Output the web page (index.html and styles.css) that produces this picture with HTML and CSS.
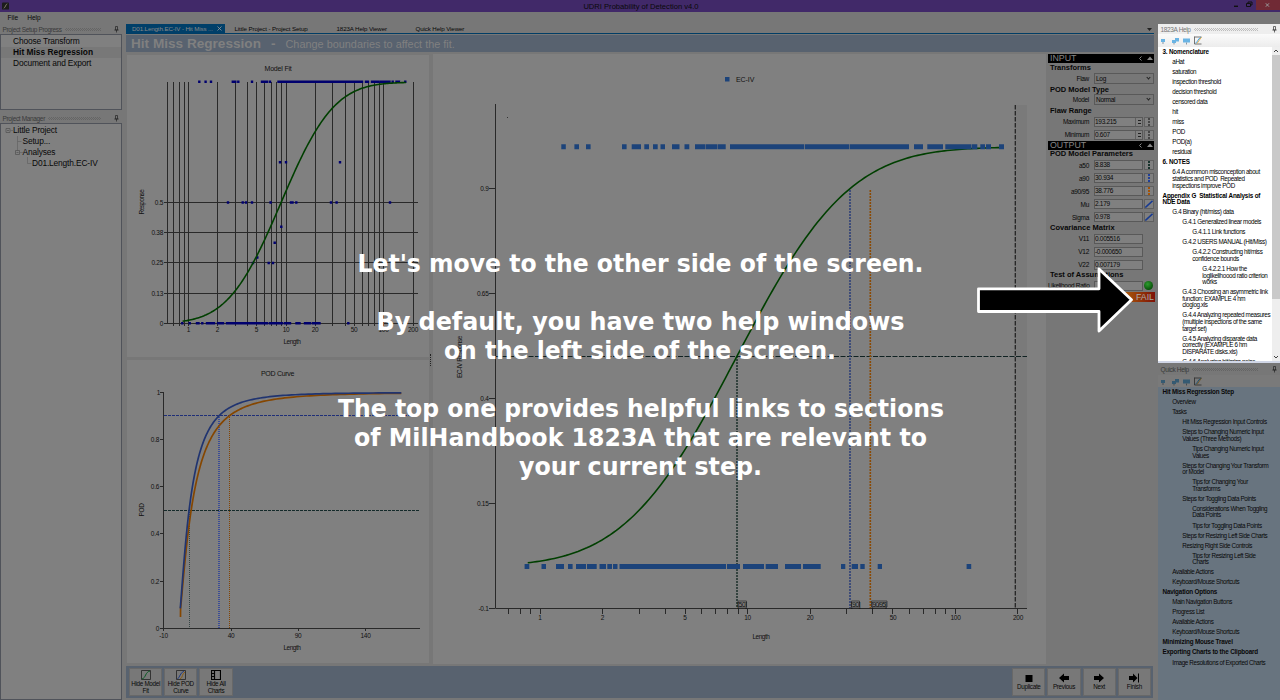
FILE: index.html
```
<!DOCTYPE html>
<html lang="en">
<head>
<meta charset="utf-8">
<title>UDRI Probability of Detection v4.0</title>
<link rel="stylesheet" href="styles.css">
</head>
<body>
<div class="app">
  <header class="titlebar">
    <svg class="logo" viewBox="0 0 8 8"><rect width="8" height="8" rx="1" fill="#1c1c1c"/><path d="M2 6.500C4 6 4 2 6 1.500" stroke="#8a8570" fill="none"/></svg>
    <span>UDRI Probability of Detection v4.0</span>
    <svg class="winbtns" viewBox="0 0 50 10"><rect x="26" width="24" height="10" fill="#702a35"/><path d="M4 6.300h4" stroke="#111" stroke-width="1.400"/><path d="M16.500 3.500h4v3h-4zM18 3.500v-1.500h4v3h-1.500" stroke="#111" fill="none"/><path d="M35.800 3.300l3.200 3.400M39 3.300L35.800 6.700" stroke="#999"/></svg>
  </header>
  <nav class="menu"><span>File</span><span>Help</span></nav>
  <div class="main">
    <aside class="left">
      <div class="phead"><span>Project Setup Progress</span><i></i><svg viewBox="0 0 5 7"><path d="M1.500.5h2v3.500h-2zM.3 4h4.400M2.500 4v2.500" stroke="#222" stroke-width=".7" fill="none"/></svg></div>
      <div class="steps"><div>Choose Transform</div><div class="on">Hit Miss Regression</div><div>Document and Export</div></div>
      <div class="phead second"><span>Project Manager</span><i></i><svg viewBox="0 0 5 7"><path d="M1.500.5h2v3.500h-2zM.3 4h4.400M2.500 4v2.500" stroke="#222" stroke-width=".7" fill="none"/></svg></div>
      <div class="ptree">
        <svg class="lines" viewBox="0 0 36 50"><path d="M9.500 6.500h3M16.500 12v15M16.500 17.500h4M19 28.500h3M26.500 33v6.500h4" stroke="#666" fill="none" stroke-width=".8"/><path d="M5 4.500h4v4H5zM14.500 26.500h4v4h-4zM6 6.500h2M15.500 28.500h2" stroke="#555" fill="none" stroke-width=".8"/></svg>
        <div class="t0">Little Project</div><div class="t1">Setup...</div><div class="t1">Analyses</div><div class="t2">D01.Length.EC-IV</div>
      </div>
    </aside>
    <main class="center">
      <div class="tabs"><span class="tab on">D01.Length.EC-IV - Hit Miss ...<svg viewBox="0 0 5 5"><path d="M.5.5l4 4M4.500.5l-4 4" stroke="#999" stroke-width=".8"/></svg></span><span class="tab b">Little Project - Project Setup</span><span class="tab c">1823A Help Viewer</span><span class="tab d">Quick Help Viewer</span><span class="drop"></span></div>
      <div class="heading"><b>Hit Miss Regression</b><b class="dash">-</b><span>Change boundaries to affect the fit.</span></div>
      <div class="work">
        <div class="minis">
          <svg class="chart" id="fit" viewBox="127 55 302 302">
            <g id="fitgrid" class="grid"></g>
            <g class="grid"><path d="M167.500 82V324M164 202.500H418M164 232.500H418M164 262.500H418M164 293.500H418M164 323.500H418"/></g>
            <path id="fitmarks" class="dots"/>
            <path id="fitcurve" class="green" stroke-width="1.600"/>
            <g class="lbl"><text x="278" y="71" class="ct" textLength="27">Model Fit</text><text x="292" y="344" textLength="17">Length</text><text transform="translate(143.500 202) rotate(-90)" textLength="25">Response</text>
            <text x="188.500" y="332">1</text><text x="217.500" y="332">2</text><text x="256.500" y="332">5</text><text x="286" y="332">10</text><text x="315" y="332">20</text><text x="354" y="332">50</text><text x="383.500" y="332">100</text><text x="413" y="332">200</text>
            <g class="end"><text x="163" y="205">0.5</text><text x="163" y="235">0.38</text><text x="163" y="265">0.25</text><text x="163" y="295.500">0.13</text><text x="163" y="325.500">0</text></g></g>
          </svg>
          <svg class="chart" id="pod" viewBox="127 360 302 303">
            <path class="axis" d="M163.500 392V628.500H420M160 392.500h3M160 439.500h3M160 486.500h3M160 533.500h3M160 581.500h3M160 628.500h3M163.500 628v3M231.500 628v3M298.500 628v3M365.500 628v3"/>
            <path d="M164 415.500H420" stroke="#1f2f78" stroke-dasharray="3 1"/><path d="M164 510.500H420" stroke="#142a2a" stroke-dasharray="3 1"/>
            <path d="M189.500 510V628" stroke="#354545" stroke-dasharray="1 1"/><path d="M219 415V628" stroke="#3b4c96" stroke-width="2" stroke-dasharray="1 1"/><path d="M229.500 415V628" stroke="#834300" stroke-dasharray="1 1"/>
            <path id="podorange" fill="none" stroke="#854600" stroke-width="1.700"/><path id="podblue" fill="none" stroke="#203470" stroke-width="1.700"/>
            <g class="lbl"><text x="277.500" y="376" class="ct" textLength="33">POD Curve</text><text x="292" y="650" textLength="17">Length</text><text transform="translate(143.500 510) rotate(-90)">POD</text><text x="163.500" y="637.500">-10</text><text x="231" y="637.500">40</text><text x="298" y="637.500">90</text><text x="365.500" y="637.500">140</text>
            <g class="end"><text x="160" y="394.500">1</text><text x="159" y="441.500">0.8</text><text x="159" y="488.500">0.6</text><text x="159" y="535.500">0.4</text><text x="159" y="583.500">0.2</text><text x="159" y="630.500">0</text></g></g>
          </svg>
        </div>
        <div class="grip"></div>
        <svg class="chart" id="big" viewBox="433 54 613 610">
          <rect x="1015" y="105" width="12" height="503" fill="#7a7a7a"/>
          <path class="axis" d="M495.500 104V608.500H1027M489 188.500h6M489 293.500h6M489 398.500h6M489 503.500h6M489 608.500h6"/>
          <g id="bigticks" class="axis"></g>
          <path d="M496 356.500H1027" stroke="#102222" stroke-dasharray="5 1.500" stroke-width="1.200"/>
          <path d="M1015.300 105V608" stroke="#242424" stroke-dasharray="4.500 1.500" stroke-width="1.300"/>
          <path d="M737 356V608" stroke="#152a24" stroke-width="1.400" stroke-dasharray="2 1"/>
          <path d="M850 190V608" stroke="#2e4078" stroke-width="1.600" stroke-dasharray="2 1"/>
          <path d="M870.300 190V608" stroke="#8a4a05" stroke-width="1.600" stroke-dasharray="2 1"/>
          <path id="bigcurve" class="green" stroke-width="1.600"/>
          <path id="bigmarks" class="sq"/>
          <rect x="725" y="77" width="4.500" height="4.500" fill="#1c437a"/><rect x="507" y="117" width="1" height="1" fill="#333"/>
          <g fill="none" stroke="#333" stroke-width=".8"><path d="M738 601h8.500v6H738zM851.500 601h8v6h-8zM871.500 601H887v6h-15.500z"/></g>
          <g class="lbl"><text x="745" y="81.500" class="ct" textLength="18">EC-IV</text><text x="761" y="638.500" textLength="17">Length</text><text transform="translate(462 357) rotate(-90)" textLength="42">EC-IV Response</text>
          <text x="742" y="606.500">[50]</text><text x="855.500" y="606.500">[90]</text><text x="879" y="606.500" textLength="15">[90/95]</text>
          <text x="540" y="619.500">1</text><text x="602.500" y="619.500">2</text><text x="685" y="619.500">5</text><text x="747.500" y="619.500">10</text><text x="810" y="619.500">20</text><text x="893" y="619.500">50</text><text x="955.500" y="619.500">100</text><text x="1018" y="619.500">200</text>
          <g class="end"><text x="488.500" y="190.500">0.9</text><text x="488.500" y="295.500">0.65</text><text x="488.500" y="400.500">0.4</text><text x="488.500" y="505.500">0.15</text><text x="488.500" y="610.500">-0.1</text></g></g>
        </svg>
        <section class="params">
          <div class="bar">INPUT<svg viewBox="0 0 16 9"><path d="M4.500 2.500l-2 2 2 2" stroke="#888" fill="none"/><path d="M10 6h6l-3-3.500z" fill="#888"/></svg></div>
          <h4>Transforms</h4>
          <div class="row c"><label>Flaw</label><span class="combo">Log<i></i></span></div>
          <h4>POD Model Type</h4>
          <div class="row c"><label>Model</label><span class="combo">Normal<i></i></span></div>
          <h4>Flaw Range</h4>
          <div class="row"><label>Maximum</label><span class="fld spin">193.215</span><span class="ic gray"><b></b></span></div>
          <div class="row"><label>Minimum</label><span class="fld spin">0.607</span><span class="ic gray"><b></b></span></div>
          <div class="bar">OUTPUT<svg viewBox="0 0 16 9"><path d="M4.500 2.500l-2 2 2 2" stroke="#888" fill="none"/><path d="M10 6h6l-3-3.500z" fill="#888"/></svg></div>
          <h4 class="out">POD Model Parameters</h4>
          <div class="row"><label>a50</label><span class="fld">8.838</span><span class="ic teal"><b></b></span></div>
          <div class="row"><label>a90</label><span class="fld">30.934</span><span class="ic blue"><b></b></span></div>
          <div class="row"><label>a90/95</label><span class="fld">38.776</span><span class="ic orange"><b></b></span></div>
          <div class="row"><label>Mu</label><span class="fld">2.179</span><span class="ic"><svg viewBox="0 0 9 9"><path d="M.3 8.500L8.500 1" stroke="#173a91" stroke-width="1.800"/></svg></span></div>
          <div class="row"><label>Sigma</label><span class="fld">0.978</span><span class="ic"><svg viewBox="0 0 9 9"><path d="M.3 8.500L8.500 1" stroke="#173a91" stroke-width="1.800"/></svg></span></div>
          <h4 class="out">Covariance Matrix</h4>
          <div class="row"><label>V11</label><span class="fld">0.005516</span></div>
          <div class="row"><label>V12</label><span class="fld">-0.000650</span></div>
          <div class="row"><label>V22</label><span class="fld">0.007179</span></div>
          <h4 class="out">Test of Assumptions</h4>
          <div class="row l"><label>Likelihood Ratio</label><span class="fld"></span><span class="led"></span></div>
          <div class="fail">FAIL</div>
        </section>
      </div>
      <footer class="actions">
        <button><svg viewBox="0 0 10 10"><path d="M.5.5h9v9h-9z" class="o"/><path d="M1 9C5 8 4 2 9 1" stroke="#0b5a25" fill="none"/></svg><span>Hide Model<br>Fit</span></button>
        <button><svg viewBox="0 0 10 10"><path d="M.5.5h9v9h-9z" class="o"/><path d="M1.500 9C4 7 4 3 8 1" stroke="#203a80" fill="none"/><path d="M4 9C7 8 6 3 9 2" stroke="#8a5a10" fill="none"/></svg><span>Hide POD<br>Curve</span></button>
        <button><svg viewBox="0 0 10 10"><path d="M.5.5h9v9h-9zM3.500.5v9M.5 3.500h3M.5 6.500h3" class="o dark"/></svg><span>Hide All<br>Charts</span></button>
        <div class="sp"></div>
        <button><svg viewBox="0 0 10 10"><path d="M1.500 2h7v7h-7z"/></svg><span>Duplicate</span></button>
        <button><svg viewBox="0 0 10 10"><path d="M0 5l5-4.500v2.500h5v4H5v2.500z"/></svg><span>Previous</span></button>
        <button><svg viewBox="0 0 10 10"><path d="M10 5L5 .5v2.500H0v4h5v2.500z"/></svg><span>Next</span></button>
        <button><svg viewBox="0 0 10 10"><path d="M8.500 5L4 .5v2.500H0v4h4v2.500zM9 .5h1v9H9z"/></svg><span>Finish</span></button>
      </footer>
    </main>
    <aside class="right">
      <section class="help lit">
        <div class="phead"><span>1823A Help</span><i></i><svg viewBox="0 0 5 7"><path d="M1.500.5h2v3.500h-2zM.3 4h4.400M2.500 4v2.500" stroke="#333" stroke-width=".7" fill="none"/></svg></div>
        <div class="tools"><svg viewBox="0 0 44 9"><path d="M0 3h4v3H0zM11 4h4v3h-4zM14 2h4v3.500h-4zM22 2.500h7v4h-7z" fill="#6ab4e4"/><path d="M2 6v2M13 7v1.500M25.500 6.500v2" stroke="#8595a5"/><path d="M33.500.5v7.500h7M33.500 1h7" stroke="#555" fill="none" stroke-width=".8"/><path d="M34.500 7C37 6 36 4 40 1" stroke="#2d9fe8" fill="none"/><path d="M36 7.500L40.500 1" stroke="#e5a640" stroke-width=".9"/></svg></div>
        <div class="scrollwrap"><div class="tree">
          <p class="l0">3. Nomenclature</p><p>aHat</p><p>saturation</p><p>inspection threshold</p><p>decision threshold</p><p>censored data</p><p>hit</p><p>miss</p><p>POD</p><p>POD(a)</p><p>residual</p>
          <p class="l0">6. NOTES</p><p>6.4 A common misconception about<br>statistics and POD&nbsp; Repeated<br>inspections improve POD</p>
          <p class="l0">Appendix G&nbsp; Statistical Analysis of<br>NDE Data</p><p>G.4 Binary (hit/miss) data</p><p class="l2">G.4.1 Generalized linear models</p><p class="l3">G.4.1.1 Link functions</p><p class="l2">G.4.2 USERS MANUAL (Hit/Miss)</p><p class="l3">G.4.2.2 Constructing hit/miss<br>confidence bounds</p><p class="l4">G.4.2.2.1 How the<br>loglikelihoood ratio criterion<br>works</p><p class="l2">G.4.3 Choosing an asymmetric link<br>function: EXAMPLE 4 hm<br>cloglog.xls</p><p class="l2">G.4.4 Analyzing repeated measures<br>(multiple inspections of the same<br>target set)</p><p class="l2">G.4.5 Analyzing disparate data<br>correctly (EXAMPLE 6 hm<br>DISPARATE disks.xls)</p><p class="l2">G.4.6 Analyzing hit/miss noise</p>
        </div><div class="scroll"><svg viewBox="0 0 8 8"><path d="M2 5l2-2 2 2" stroke="#444" fill="none"/></svg><div class="thumb"></div><svg viewBox="0 0 8 8"><path d="M2 3l2 2 2-2" stroke="#444" fill="none"/></svg></div></div>
      </section>
      <section class="help dim">
        <div class="phead"><span>Quick Help</span><i></i><svg viewBox="0 0 5 7"><path d="M1.500.5h2v3.500h-2zM.3 4h4.400M2.500 4v2.500" stroke="#222" stroke-width=".7" fill="none"/></svg></div>
        <div class="tools"><svg viewBox="0 0 44 9"><path d="M0 3h4v3H0zM11 4h4v3h-4zM14 2h4v3.500h-4zM22 2.500h7v4h-7z" fill="#355a72"/><path d="M2 6v2M13 7v1.500M25.500 6.500v2" stroke="#444b52"/><path d="M33.500.5v7.500h7M33.500 1h7" stroke="#2b2b2b" fill="none" stroke-width=".8"/><path d="M34.500 7C37 6 36 4 40 1" stroke="#175074" fill="none"/><path d="M36 7.500L40.500 1" stroke="#735320" stroke-width=".9"/></svg></div>
        <div class="tree">
          <p class="l0">Hit Miss Regression Step</p><p>Overview</p><p>Tasks</p><p class="l2">Hit Miss Regression Input Controls</p><p class="l2">Steps to Changing Numeric Input<br>Values (Three Methods)</p><p class="l3">Tips Changing Numeric Input<br>Values</p><p class="l2">Steps for Changing Your Transform<br>or Model</p><p class="l3">Tips for Changing Your<br>Transforms</p><p class="l2">Steps for Toggling Data Points</p><p class="l3">Considerations When Toggling<br>Data Points</p><p class="l3">Tips for Toggling Data Points</p><p class="l2">Steps for Resizing Left Side Charts</p><p class="l2">Resizing Right Side Controls</p><p class="l3">Tips for Resizing Left Side<br>Charts</p><p>Available Actions</p><p>Keyboard/Mouse Shortcuts</p>
          <p class="l0">Navigation Options</p><p>Main Navigation Buttons</p><p>Progress List</p><p>Available Actions</p><p>Keyboard/Mouse Shortcuts</p><p class="l0">Minimizing Mouse Travel</p><p class="l0">Exporting Charts to the Clipboard</p><p>Image Resolutions of Exported Charts</p>
        </div>
      </section>
    </aside>
  </div>
  <svg class="coach" viewBox="0 0 1280 700">
    <g class="say">
      <text x="357.500" y="272" textLength="566" lengthAdjust="spacingAndGlyphs">Let's move to the other side of the screen.</text>
      <text x="376.500" y="330" textLength="528" lengthAdjust="spacingAndGlyphs">By default, you have two help windows</text>
      <text x="444" y="359" textLength="392" lengthAdjust="spacingAndGlyphs">on the left side of the screen.</text>
      <text x="338" y="417" textLength="606" lengthAdjust="spacingAndGlyphs">The top one provides helpful links to sections</text>
      <text x="354" y="446" textLength="573" lengthAdjust="spacingAndGlyphs">of MilHandbook 1823A that are relevant to</text>
      <text x="519" y="475" textLength="243" lengthAdjust="spacingAndGlyphs">your current step.</text>
    </g>
    <path d="M978.500 288.800H1099V269L1131.500 299.800L1099 331V311.500H978.500Z" fill="#000" stroke="#fff" stroke-width="2.800" stroke-linejoin="round"/>
  </svg>
</div>
<script src="charts.js"></script>
</body>
</html>
```
FILE: charts.js
```
const el = id => document.getElementById(id);

// Normal cumulative distribution
function cdf(z) {
  const t = 1 / (1 + 0.2316419 * Math.abs(z));
  const d = 0.3989423 * Math.exp(-z * z / 2);
  const p = d * t * (0.3193815 + t * (-0.3565638 + t * (1.781478 + t * (-1.821256 + t * 1.330274))));
  return z > 0 ? 1 - p : p;
}

function curve(id, from, to, mu, sigma, px, py) {
  const pts = [];
  for (let i = 0; i <= 160; i++) {
    const v = from * Math.pow(to / from, i / 160);
    pts.push(px(v).toFixed(2) + ' ' + py(cdf((Math.log(v) - mu) / sigma)).toFixed(2));
  }
  el(id).setAttribute('d', 'M' + pts.join('L'));
}

const bx = v => 540.3 + 207.5 * Math.log10(v);
const fx = v => 188.5 + 97.7 * Math.log10(v);
const px = v => 177.2 + 1.342 * v;
curve('bigcurve', 0.87, 165, 2.179, 0.978, bx, p => 566.5 - 419.5 * p);
curve('fitcurve', 0.87, 168, 2.179, 0.978, fx, p => 323.4 - 241.2 * p);
curve('podblue', 2.3, 167, 2.179, 0.978, px, p => 628.3 - 235.8 * p);
curve('podorange', 2.5, 167, 2.34, 1.025, px, p => 628.3 - 235.8 * p);
el('podorange').setAttribute('d', el('podorange').getAttribute('d').replace('M', 'M180.5 617L'));

const ticks = [.7, .8, .9, 1, 2, 3, 4, 5, 6, 7, 8, 9, 10, 20, 30, 40, 50, 60, 70, 80, 90, 100, 200];
el('bigticks').innerHTML = ticks.map(v => `<path d="M${Math.floor(bx(v)) + .5} 608v6"/>`).join('');
el('fitgrid').innerHTML = ticks.map(v => `<path d="M${Math.floor(fx(v)) + .5} 82V326"/>`).join('');

const row = (y, list) => list.map(([a, b]) => `M${a} ${y}H${b}`).join('');
el('bigmarks').setAttribute('d',
  row(146.8, [[561.3,565.8],[574.4,579],[586,590.6],[622,626.6],[631.7,641],[644.3,649],[653,657.7],[660.5,665],[672,679.5],[684.5,689.3],[695,705.5],[706,717.5],[718,725.7],[730,804],[804.7,849],[849.6,909],[914,923],[927.3,943],[945.3,971.5],[972,977.3],[980.3,985],[986,991],[999,1004]]) +
  row(566.5, [[524.6,529.3],[541.5,546],[556,564],[568,572.6],[576,586],[587,596.7],[599.5,606],[607.3,612],[613,617.5],[619.5,726],[727,740],[743,764],[765.7,778],[785,801],[803,820.7],[841,845.3],[851.7,858],[860.3,864.7],[877.7,882],[966.6,971.2]]));

// Small chart: each entry is y, then centre spans of the markers
const spans = [
  [81.8, [199.3,199.3],[205.6,205.6],[211,211],[232.8,235.3],[238.3,238.3],[252,252],[262,267],[270,270],[278.5,362],[366,368],[372,378],[380.5,389.5],[392.7,392.7],[396.5,399],[405.3,405.3]],
  [162.3, [280,280],[286,286],[340,340]],
  [202.5, [228,228],[242.7,242.7],[246,246],[252,252],[270.6,270.6],[291,292.5],[296.3,296.3],[331,331],[336.6,336.6],[390,390]],
  [226.7, [281.3,281.3]], [242.7, [274.7,274.7]], [257.5, [257.3,257.3]], [263, [253,253],[268.7,268.7],[273,273]],
  [323.3, [182.3,182.3],[189.7,189.7],[197,198.5],[202.3,202.3],[207,214],[218,221],[223,223],[227,267],[270,282],[285,290],[296.5,299.5],[305,310],[313,319.5],[348.3,348.3]]
];
el('fitmarks').setAttribute('d', spans.map(([y, ...s]) => row(y, s.map(([a, b]) => [a - 1.2, b + 1.2]))).join(''));
```
FILE: styles.css
```
* { box-sizing: border-box; }
body { margin: 0; font-family: "Liberation Sans", Arial, sans-serif; color: #080808; background: #777; overflow: hidden; }
.app { position: relative; width: 1280px; height: 700px; display: flex; flex-direction: column; overflow: hidden; }
.titlebar { height: 12px; flex: none; background: #412969; display: grid; grid-template-columns: 1fr auto 1fr; align-items: center; padding-left: 2px; font-size: 7.600px; color: #0a0a0a; }
.logo { width: 7px; height: 8px; }
.winbtns { width: 50px; height: 10px; justify-self: end; align-self: start; }
.menu { height: 12px; flex: none; display: flex; gap: 9px; padding: 1px 0 0 7.500px; font-size: 6.600px; line-height: 10px; }
.main { height: 676px; display: flex; gap: 4px; }
.left { width: 122px; display: flex; flex-direction: column; }
.phead { height: 10px; flex: none; display: flex; align-items: center; gap: 3px; padding: 0 3px 0 2.500px; font-size: 6.500px; letter-spacing: -.35px; color: #3a3a3a; white-space: nowrap; }
.phead i { flex: 1; height: 3px; margin-right: 10px; background: repeating-conic-gradient(#656565 0 25%, transparent 0 50%) 0 0 / 2px 2px; }
.phead svg { width: 5px; height: 7px; }
.steps { height: 76px; border: 1px solid #50535a; background: #808080; padding-top: 1px; font-size: 8.400px; line-height: 11px; letter-spacing: -.15px; }
.steps div { padding-left: 12px; }
.steps .on { background: #787878; font-weight: bold; letter-spacing: 0; }
.phead.second { margin-top: 3px; }
.ptree { position: relative; flex: 1; border: 1px solid #50535a; background: #808080; padding-top: 1px; font-size: 8.400px; line-height: 11px; letter-spacing: -.15px; }
.lines { position: absolute; left: 0; top: 0; width: 36px; height: 50px; }
.t0 { padding-left: 12px; } .t1 { padding-left: 21.500px; } .t2 { padding-left: 31px; }
.center { width: 1028px; display: flex; flex-direction: column; }
.tabs { height: 10px; flex: none; display: flex; border-bottom: 1px solid #003d66; font-size: 6.200px; letter-spacing: -.12px; line-height: 9px; white-space: nowrap; }
.tab.on { width: 99px; background: #003f69; color: #888; padding-left: 6px; display: flex; align-items: center; justify-content: space-between; padding-right: 3px; }
.tab.on svg { width: 5px; height: 5px; }
.tab.b { margin-left: 9.500px; width: 102px; } .tab.c { width: 79px; }
.drop { margin: 4px 2px 0 auto; width: 5px; height: 3px; background: #222; clip-path: polygon(0 0, 100% 0, 50% 100%); }
.heading { height: 17px; flex: none; margin-top: 1px; background: #58626f; color: #808080; display: flex; align-items: center; padding-left: 5px; font-size: 13.600px; line-height: 16px; white-space: nowrap; }
.heading .dash { margin: 0 10px 0 10px; }
.heading span { font-size: 10.900px; }
.work { height: 614px; display: flex; padding-top: 2px; }
.minis { width: 304px; display: flex; flex-direction: column; gap: 3px; padding: 1px 1px 0; }
.chart { display: block; background: #808080; }
#fit { width: 302px; height: 302px; } #pod { width: 302px; height: 303px; } #big { width: 613px; height: 610px; }
.grip { width: 3px; height: 12px; align-self: center; border-left: 1px dotted #222; }
.grid path, .axis, .axis path { stroke: #292929; fill: none; }
.green { stroke: #003f00; fill: none; }
.sq { stroke: #1c437a; stroke-width: 5; }
.dots { stroke: #00006e; stroke-width: 2.600; }
.lbl { font-size: 6.500px; fill: #111; text-anchor: middle; letter-spacing: -.3px; }
.lbl .ct { font-size: 7px; }
.end { text-anchor: end; }
.params { width: 108px; padding: 0 0 0 2px; }
.bar { height: 9px; width: 106px; background: #000; color: #858585; font-size: 8.800px; line-height: 9.500px; padding-left: 2px; display: flex; justify-content: space-between; }
.bar svg { width: 16px; height: 9px; margin-right: 1px; }
.params h4 { margin: 0; height: 9.200px; padding-left: 2px; font-size: 7.500px; line-height: 9px; white-space: nowrap; }
.params h4.out { height: 8.500px; line-height: 8.500px; }
.row { height: 13px; display: flex; align-items: center; font-size: 6.500px; letter-spacing: -.3px; }
.row.c { height: 12.400px; } .row.l { height: 12px; }
.row label { width: 41px; margin-right: 5px; text-align: right; white-space: nowrap; }
.combo { width: 60px; height: 11px; border: 1px solid #595959; line-height: 9px; padding-left: 1px; display: flex; justify-content: space-between; }
.combo i { width: 3px; height: 3px; border: solid #222; border-width: 0 1px 1px 0; transform: rotate(45deg); margin: 2px 3px; }
.fld { width: 49px; height: 10px; border: 1px solid #595959; line-height: 7px; background: #808080; }
.spin { background: linear-gradient(#222, #222) 43px 2px / 3px 1px no-repeat, linear-gradient(#222, #222) 43px 5px / 3px 1px no-repeat, linear-gradient(#606060, #606060) 40px 0 / 1px 8px no-repeat, #808080; }
.ic { width: 10px; height: 10px; margin-left: 1px; border: 1px solid #606060; display: flex; justify-content: center; background: #808080; }
.ic b { width: 2px; background: repeating-linear-gradient(currentColor 0 2px, transparent 2px 3px); }
.ic svg { width: 8px; height: 8px; }
.gray { color: #444; } .teal { color: #18332c; } .blue { color: #203f98; } .orange { color: #a35307; }
.led { width: 9px; height: 9px; border-radius: 50%; margin-left: 1px; background: radial-gradient(circle at 40% 35%, #2f9c2f, #064e08 75%); }
.fail { height: 10px; width: 107px; background: linear-gradient(90deg, #a3500b 75%, #7e1207); color: #aaa; font-size: 8.800px; line-height: 10px; text-align: right; padding-right: 1px; }
.actions { height: 32px; flex: none; background: #58626f; display: flex; gap: 1.900px; padding: 2px 2px 2px 3px; margin-right: 1px; }
.sp { flex: 1; }
button { width: 33.300px; height: 28px; background: #787878; border: 1px solid #686868; padding: 0; font: 6.300px/6.500px "Liberation Sans", Arial, sans-serif; letter-spacing: -.3px; color: #080808; display: flex; flex-direction: column; align-items: center; justify-content: center; gap: 1px; white-space: nowrap; }
button svg { width: 10px; height: 10px; }
button .o { fill: none; stroke: #222; stroke-width: .8; }
button .dark { stroke: #000; stroke-width: 1.200; }
.right { width: 122px; display: flex; flex-direction: column; }
.help { display: flex; flex-direction: column; }
.lit { height: 339px; background: #f2f2f2; border-bottom: 2px solid #d0d6e6; color: #000; }
.lit .phead { color: #777; background: #eee; } .lit .phead i, .dim .phead i { margin-right: 11px; }
.lit .phead i { background: repeating-conic-gradient(#bdbdbd 0 25%, transparent 0 50%) 0 0 / 2px 2px; }
.tools { height: 13px; flex: none; padding: 2px 0 0 3px; background: linear-gradient(#fbfbfb, #ececec); }
.tools svg { width: 44px; height: 9px; display: block; }
.dim .tools { background: #7a7a7a; }
.scrollwrap { flex: 1; min-height: 0; display: flex; background: #fff; }
.tree { flex: 1; min-height: 0; overflow: hidden; padding-top: .3px; font-size: 6.300px; line-height: 6.600px; letter-spacing: -.37px; white-space: nowrap; }
.tree p { margin: 0; padding: 1.720px 0 1.720px 14.300px; }
.tree .l0 { padding-left: 4.500px; font-weight: bold; letter-spacing: -.17px; }
.tree .l2 { padding-left: 24.300px; } .tree .l3 { padding-left: 34.300px; } .tree .l4 { padding-left: 44.300px; }
.scroll { width: 8px; background: #eee; display: flex; flex-direction: column; }
.scroll svg { width: 8px; height: 8px; } .thumb { height: 244px; background: #c9c9c9; margin-bottom: auto; }
.dim { height: 337px; } .dim .phead { height: 12px; } .dim .tools { height: 12px; }
.dim .tree { background: #68747f; padding-top: .5px; }
.coach { position: absolute; left: 0; top: 0; width: 1280px; height: 700px; pointer-events: none; }
.say { fill: #fff; font: bold 24px "DejaVu Sans Condensed", "DejaVu Sans", sans-serif; }
```
